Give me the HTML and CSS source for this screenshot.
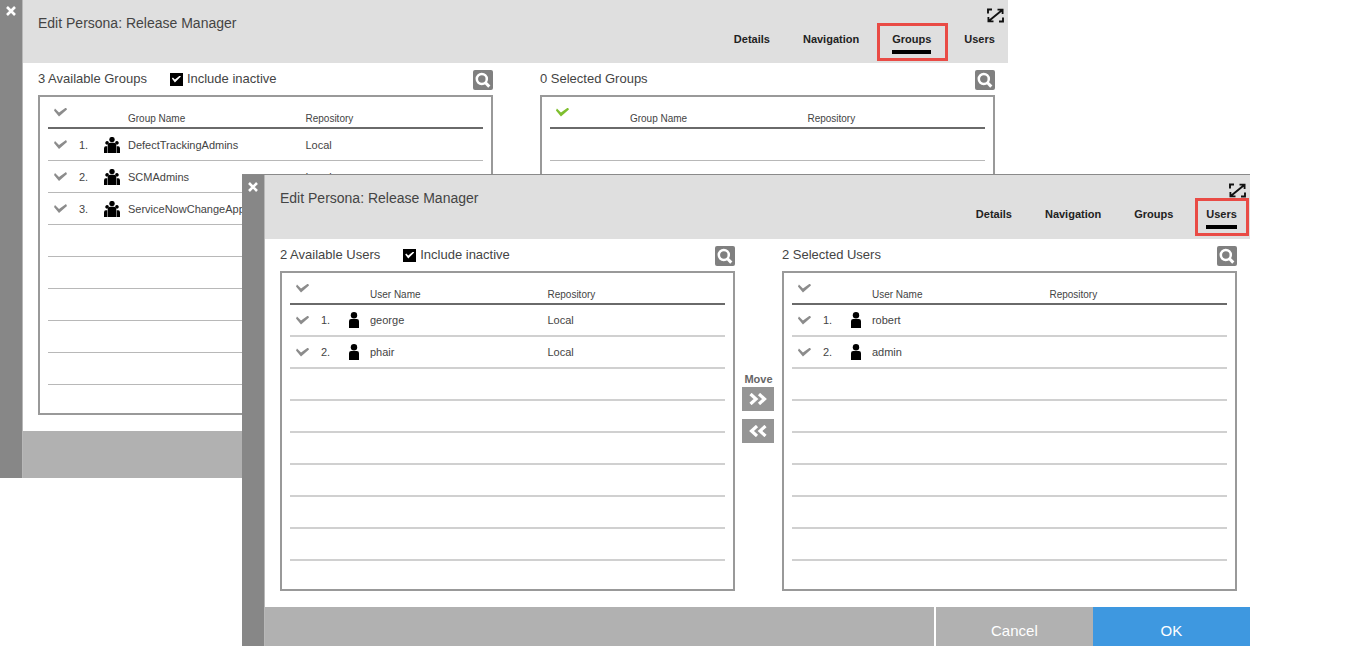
FILE: index.html
```html
<!DOCTYPE html>
<html lang="en">
<head>
<meta charset="utf-8">
<title>Edit Persona: Release Manager</title>
<link rel="stylesheet" href="styles.css">
</head>
<body>
<svg class="sprite" aria-hidden="true">
  <symbol id="close" viewBox="0 0 10 10"><path d="M1 1 9 9M9 1 1 9" fill="none" stroke="#fff" stroke-width="2.6"/></symbol>
  <symbol id="expand" viewBox="0 0 17 15"><path d="M1 5.500V1.500h4M16 9.500v4h-4M3 12 14 3" fill="none" stroke="#111" stroke-width="1.900"/><path d="M10.500 .8H16.500V6H14.700V4.200L12.500 2.600H10.500ZM6.500 14.200H.5V9H2.300V10.800L4.500 12.400H6.500Z" fill="#111"/></symbol>
  <symbol id="search" viewBox="0 0 20 20"><circle cx="8.800" cy="9" r="5" fill="none" stroke="#fff" stroke-width="2.500"/><path d="m12.300 12.500 4 4.100" stroke="#fff" stroke-width="3"/></symbol>
  <symbol id="user" viewBox="0 0 16 16"><circle cx="8" cy="3.200" r="3.200"/><path d="M3 16V9.200Q3 7 5.200 7h5.600Q13 7 13 9.200V16Z"/></symbol>
  <symbol id="group" viewBox="0 0 16 16"><circle cx="8" cy="2.600" r="2.700"/><path d="M3.700 16V8Q3.700 5.700 6 5.700h4q2.300 0 2.300 2.300V16Z"/><path d="M4.600 4.700a1.900 1.900 0 1 0-1.200 3.100l1.500-1.900ZM11.400 4.700a1.900 1.900 0 1 1 1.200 3.100l-1.500-1.900ZM0 16v-4.500Q0 9.300 1.800 9.300h1.500V16ZM16 16v-4.500Q16 9.300 14.200 9.300h-1.500V16Z"/></symbol>
  <symbol id="right" viewBox="0 0 18 12"><path d="m1.500 1 5.500 5-5.500 5M10 1l5.500 5-5.500 5" fill="none" stroke="#fff" stroke-width="3.200"/></symbol>
  <symbol id="left" viewBox="0 0 18 12"><path d="m8 1-5.500 5 5.500 5M16.500 1 11 6l5.500 5" fill="none" stroke="#fff" stroke-width="3.200"/></symbol>
</svg>
<main class="desktop">
  <section class="window window-back" aria-label="Persona groups">
    <div class="rail"><button class="icon-button" aria-label="Close"><svg class="close-icon"><use href="#close"/></svg></button></div>
    <div class="content">
      <header class="header">
        <h1 class="title">Edit Persona: Release Manager</h1>
        <div class="header-side">
          <button class="icon-button expand" aria-label="Expand"><svg class="expand-icon"><use href="#expand"/></svg></button>
          <nav class="tabs">
            <a class="tab" href="#">Details</a><a class="tab" href="#">Navigation</a><a class="tab active wide-mark" href="#">Groups</a><a class="tab" href="#">Users</a>
          </nav>
        </div>
      </header>
      <div class="body">
        <section class="panel">
          <div class="panel-head">
            <h2 class="panel-title">3 Available Groups</h2>
            <label class="inactive"><input class="box-check" type="checkbox" checked>Include inactive</label>
            <button class="search" aria-label="Search available groups"><svg class="search-icon"><use href="#search"/></svg></button>
          </div>
          <div class="frame">
            <table class="list">
              <colgroup><col class="col-check"><col class="col-number"><col class="col-icon"><col><col></colgroup>
              <thead><tr><th class="check-head"><input class="tick" type="checkbox" aria-label="Select all"></th><th></th><th></th><th>Group Name</th><th>Repository</th></tr></thead>
              <tbody>
                <tr><td><input class="tick" type="checkbox" aria-label="DefectTrackingAdmins"></td><td>1.</td><td><svg class="person"><use href="#group"/></svg></td><td>DefectTrackingAdmins</td><td>Local</td></tr>
                <tr><td><input class="tick" type="checkbox" aria-label="SCMAdmins"></td><td>2.</td><td><svg class="person"><use href="#group"/></svg></td><td>SCMAdmins</td><td>Local</td></tr>
                <tr><td><input class="tick" type="checkbox" aria-label="ServiceNowChangeApprovers"></td><td>3.</td><td><svg class="person"><use href="#group"/></svg></td><td>ServiceNowChangeApprovers</td><td></td></tr>
                <tr><td colspan="5"></td></tr><tr><td colspan="5"></td></tr><tr><td colspan="5"></td></tr><tr><td colspan="5"></td></tr><tr><td colspan="5"></td></tr>
              </tbody>
            </table>
          </div>
        </section>
        <div class="mover"></div>
        <section class="panel">
          <div class="panel-head">
            <h2 class="panel-title">0 Selected Groups</h2>
            <button class="search" aria-label="Search selected groups"><svg class="search-icon"><use href="#search"/></svg></button>
          </div>
          <div class="frame">
            <table class="list">
              <colgroup><col class="col-check"><col class="col-number"><col class="col-icon"><col><col></colgroup>
              <thead><tr><th class="check-head"><input class="tick" type="checkbox" aria-label="Select all" checked></th><th></th><th></th><th>Group Name</th><th>Repository</th></tr></thead>
              <tbody>
                <tr><td colspan="5"></td></tr><tr><td colspan="5"></td></tr><tr><td colspan="5"></td></tr><tr><td colspan="5"></td></tr><tr><td colspan="5"></td></tr><tr><td colspan="5"></td></tr><tr><td colspan="5"></td></tr><tr><td colspan="5"></td></tr>
              </tbody>
            </table>
          </div>
        </section>
      </div>
      <footer class="footer"></footer>
    </div>
  </section>

  <section class="window window-front" aria-label="Persona users">
    <div class="rail"><button class="icon-button" aria-label="Close"><svg class="close-icon"><use href="#close"/></svg></button></div>
    <div class="content">
      <header class="header">
        <h1 class="title">Edit Persona: Release Manager</h1>
        <div class="header-side">
          <button class="icon-button expand" aria-label="Expand"><svg class="expand-icon"><use href="#expand"/></svg></button>
          <nav class="tabs">
            <a class="tab" href="#">Details</a><a class="tab" href="#">Navigation</a><a class="tab" href="#">Groups</a><a class="tab active" href="#">Users</a>
          </nav>
        </div>
      </header>
      <div class="body">
        <section class="panel">
          <div class="panel-head">
            <h2 class="panel-title">2 Available Users</h2>
            <label class="inactive"><input class="box-check" type="checkbox" checked>Include inactive</label>
            <button class="search" aria-label="Search available users"><svg class="search-icon"><use href="#search"/></svg></button>
          </div>
          <div class="frame">
            <table class="list">
              <colgroup><col class="col-check"><col class="col-number"><col class="col-icon"><col><col></colgroup>
              <thead><tr><th class="check-head"><input class="tick" type="checkbox" aria-label="Select all"></th><th></th><th></th><th>User Name</th><th>Repository</th></tr></thead>
              <tbody>
                <tr><td><input class="tick" type="checkbox" aria-label="george"></td><td>1.</td><td><svg class="person"><use href="#user"/></svg></td><td>george</td><td>Local</td></tr>
                <tr><td><input class="tick" type="checkbox" aria-label="phair"></td><td>2.</td><td><svg class="person"><use href="#user"/></svg></td><td>phair</td><td>Local</td></tr>
                <tr><td colspan="5"></td></tr><tr><td colspan="5"></td></tr><tr><td colspan="5"></td></tr><tr><td colspan="5"></td></tr><tr><td colspan="5"></td></tr><tr><td colspan="5"></td></tr>
              </tbody>
            </table>
          </div>
        </section>
        <div class="mover">
          <span class="mover-label">Move</span>
          <button class="move" aria-label="Add to selected"><svg class="move-icon"><use href="#right"/></svg></button>
          <button class="move" aria-label="Remove from selected"><svg class="move-icon"><use href="#left"/></svg></button>
        </div>
        <section class="panel">
          <div class="panel-head">
            <h2 class="panel-title">2 Selected Users</h2>
            <button class="search" aria-label="Search selected users"><svg class="search-icon"><use href="#search"/></svg></button>
          </div>
          <div class="frame">
            <table class="list">
              <colgroup><col class="col-check"><col class="col-number"><col class="col-icon"><col><col></colgroup>
              <thead><tr><th class="check-head"><input class="tick" type="checkbox" aria-label="Select all"></th><th></th><th></th><th>User Name</th><th>Repository</th></tr></thead>
              <tbody>
                <tr><td><input class="tick" type="checkbox" aria-label="robert"></td><td>1.</td><td><svg class="person"><use href="#user"/></svg></td><td>robert</td><td></td></tr>
                <tr><td><input class="tick" type="checkbox" aria-label="admin"></td><td>2.</td><td><svg class="person"><use href="#user"/></svg></td><td>admin</td><td></td></tr>
                <tr><td colspan="5"></td></tr><tr><td colspan="5"></td></tr><tr><td colspan="5"></td></tr><tr><td colspan="5"></td></tr><tr><td colspan="5"></td></tr><tr><td colspan="5"></td></tr>
              </tbody>
            </table>
          </div>
        </section>
      </div>
      <footer class="footer">
        <button class="action cancel">Cancel</button>
        <button class="action ok">OK</button>
      </footer>
    </div>
  </section>
</main>
</body>
</html>
```
FILE: styles.css
```css
* { box-sizing: border-box; }
body {
  margin: 0;
  background: #fff;
  color: #444;
  font: 11px/16px "Liberation Sans", Arial, sans-serif;
}
button { border: 0; padding: 0; font: inherit; cursor: pointer; }
svg { display: block; }
.sprite { position: absolute; width: 0; height: 0; }

.desktop { position: relative; height: 100vh; overflow: hidden; }
.window { position: absolute; display: flex; width: 74%; background: #fff; }
.window-back { top: 0; left: 0; }
.window-front { top: 174px; left: 242px; border-top: 1px solid #8a8a8a; }

.rail { flex: none; width: 23px; padding: 6px; background: #878787; border-right: 1px solid #b8b8b8; }
.window-front .rail { padding-top: 7px; }
.icon-button { display: block; background: none; }
.close-icon { width: 10px; height: 10px; }
.content { flex: 1; min-width: 0; }

.header { display: flex; justify-content: space-between; height: 63px; padding: 8px 13px 0 15px; background: #dfdfdf; }
.window-front .header { height: 64px; }
.title { margin: 0; padding-top: 5px; font-size: 14px; line-height: 20px; font-weight: 400; }
.header-side { display: flex; flex-direction: column; align-items: flex-end; gap: 8px; }
.expand { margin-right: -9px; }
.expand-icon { width: 17px; height: 15px; }
.tabs { display: flex; gap: 33px; }
.tab { position: relative; height: 23px; color: #222; font-weight: 700; text-decoration: none; }
.active { border-bottom: 4px solid #000; }
/* Callout frame around the current tab */
.active::after { content: ""; position: absolute; inset: -8px -12px -11px -11px; border: 3px solid #e94b45; }
.wide-mark::after { left: -15px; right: -17px; }

.body { display: grid; grid-template-columns: 1fr 47px 1fr; padding: 0 13px 16px 15px; }
.panel { min-width: 0; }
.panel-head { display: flex; align-items: center; height: 32px; font-size: 13px; }
.panel-title { margin: 0; font-size: 13px; font-weight: 400; }
.inactive { display: flex; align-items: center; gap: 4px; margin-left: 23px; }
.box-check { appearance: none; display: grid; place-items: center; width: 13px; height: 13px; margin: 0; background: #000; }
.box-check:checked::before { content: ""; width: 9px; height: 7px; background: #fff; clip-path: polygon(0 3px, 1px 2px, 3px 4px, 8px 0, 9px 1px, 3px 7px); }
.search { width: 20px; height: 20px; margin: 2px 0 0 auto; border-radius: 2px; background: #808080; }
.search-icon { width: 20px; height: 20px; }

.frame { padding: 0 8px 28px; border: 2px solid #999; }
.list { width: 100%; table-layout: fixed; border-collapse: separate; border-spacing: 0; }
.col-check { width: 31px; }
.col-number { width: 25px; }
.col-icon { width: 24px; }
.list th, .list td { height: 32px; padding: 0; text-align: left; white-space: nowrap; }
.list th { padding-top: 14px; border-bottom: 2px solid #6a6a6a; font-size: 10px; font-weight: 400; }
.list .check-head { padding-top: 0; }
.list td { border-bottom: 1px solid #b8b8b8; }
.window-front .list td { border-bottom: 2px solid #d0d0d0; }
.tick { appearance: none; display: block; width: 13px; height: 9px; margin: 0 0 0 6px; background: #8c8c8c; clip-path: polygon(0 3px, 1px 1px, 5px 5px, 12px 0, 13px 2px, 5px 9px); }
.tick:checked { background: #7fbf2f; }
.person { width: 16px; height: 16px; fill: #000; }

.mover { display: flex; flex-direction: column; align-items: center; padding-top: 132px; }
.mover-label { color: #666; font-weight: 700; }
.move { display: grid; place-items: center; width: 32px; height: 24px; margin-bottom: 8px; background: #959595; }
.move-icon { width: 18px; height: 12px; }

.footer { display: flex; justify-content: flex-end; height: 47px; background: #b1b1b1; }
.action { width: 157px; color: #fff; font-size: 15px; }
.cancel { box-sizing: content-box; border-left: 2px solid #fff; background: #b1b1b1; }
.ok { background: #3e98e0; }
```
